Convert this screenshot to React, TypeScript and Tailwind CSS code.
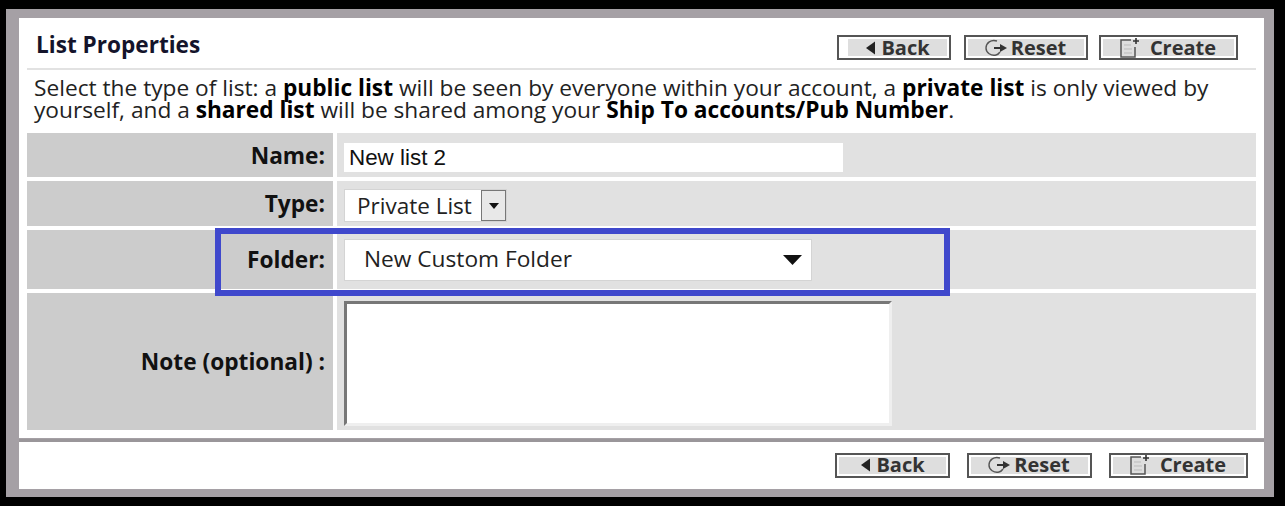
import React from 'react';

function BackIcon() {
  return (
    <svg width="11" height="14" viewBox="0 0 11 14" className="mr-[5px] shrink-0">
      <path d="M10 0.5 L1 7 L10 13.5 Z" fill="#222" />
    </svg>
  );
}

function ResetIcon() {
  return (
    <svg width="24" height="20" viewBox="0 0 24 20" className="mr-[3px] -ml-[2px] shrink-0" fill="none">
      <path d="M13 3 C7 1 2 5 2 10 C2 15 7 18 12 17 C14 16.6 15 15.5 16 14" stroke="#555" strokeWidth="1.4" />
      <path d="M10 9 L16 9 L16 6 L23 10 L16 14 L16 11 L10 11 Z" fill="#333" />
    </svg>
  );
}

function CreateIcon() {
  return (
    <svg width="23" height="22" viewBox="0 0 23 22" className="mr-[8px] -ml-[2px] shrink-0" fill="none">
      <path d="M12 3 L2 3 L2 20 L16 20 L16 10" stroke="#555" strokeWidth="1.5" />
      <path d="M5 8 H12 M5 12 H13 M5 16 H13" stroke="#bbb" strokeWidth="1" />
      <path d="M17 1 L17 7 M14 4 L20 4" stroke="#333" strokeWidth="1.6" />
    </svg>
  );
}

function ToolButton({ icon, label, className }: { icon: React.ReactNode; label: string; className: string }) {
  return (
    <button className={`h-[25px] border-2 border-[#555] bg-white p-[2px] ${className}`}>
      <span className="flex h-full items-center justify-center bg-[#dedede] text-[20px] leading-none font-bold text-[#333]">
        {icon}
        {label}
      </span>
    </button>
  );
}

function Row({ label, height, children }: { label: string; height: string; children: React.ReactNode }) {
  return (
    <div className={`flex gap-1 ${height}`}>
      <div className="flex w-[306px] items-center justify-end bg-[#cccccc] pt-[2px] pr-2 text-[22.7px] font-bold text-[#111]">{label}</div>
      <div className="flex flex-1 items-center bg-[#e1e1e1] pl-[7px]">{children}</div>
    </div>
  );
}

export default function App() {
  return (
    <div className="h-[506px] w-[1285px] bg-black pt-[9px] pr-[11px] pb-[9px] pl-[6px] font-['Open_Sans',sans-serif]">
      <div className="relative flex h-full flex-col bg-[#a5a0a5] pt-[9px] pr-[10px] pb-[8px] pl-[13px]">
        <div className="flex h-[420px] flex-col bg-white px-2">
          <div className="flex h-[52px] items-center justify-between border-b-2 border-[#e2e2e2] pr-[18px] pl-[9px]">
            <h2 className="pt-[4px] text-[22.6px] font-bold text-[#14142b]">List Properties</h2>
            <div className="flex pt-[9px]">
              <ToolButton className="w-[114px] pl-[9px]" icon={<BackIcon />} label="Back" />
              <ToolButton className="ml-[13px] w-[124px]" icon={<ResetIcon />} label="Reset" />
              <ToolButton className="ml-[11px] w-[139px]" icon={<CreateIcon />} label="Create" />
            </div>
          </div>
          <p className="mt-[7px] pl-[7px] text-[22.7px] leading-[22px] whitespace-nowrap text-[#222]">
            Select the type of list: a <b className="text-black">public list</b> will be seen by everyone within your account, a <b className="text-black">private list</b> is only viewed by
            <br />
            yourself, and a <b className="text-black">shared list</b> will be shared among your <b className="text-black">Ship To accounts/Pub Number</b>.
          </p>
          <div className="mt-[12px] flex flex-col gap-1">
            <Row label="Name:" height="h-[44px]">
              <input
                readOnly
                value="New list 2"
                className="mt-[5px] h-[29px] w-[499px] bg-white pl-[5px] font-['Liberation_Sans',sans-serif] text-[22.4px] text-[#111] outline-none"
              />
            </Row>
            <Row label="Type:" height="h-[45px]">
              <div className="mt-[4px] flex h-[33px] w-[163px] items-center border border-[#d4d4d4] bg-white pl-[12px] text-[22.5px] text-[#222]">
                Private List
                <span className="ml-auto flex h-full w-[25px] items-center justify-center border border-[#777] bg-[#e8e8e8]">
                  <svg width="10" height="6" viewBox="0 0 10 6">
                    <path d="M0 0 H10 L5 6 Z" fill="#111" />
                  </svg>
                </span>
              </div>
            </Row>
            <Row label="Folder:" height="h-[59px]">
              <div className="flex h-[42px] w-[468px] items-center justify-between border border-[#d4d4d4] bg-white pr-[9px] pl-[19px] text-[22.7px] text-[#222]">
                New Custom Folder
                <svg width="19" height="10" viewBox="0 0 19 10">
                  <path d="M0 0 H19 L9.5 10 Z" fill="#111" />
                </svg>
              </div>
            </Row>
            <Row label="Note (optional) :" height="h-[137px]">
              <textarea
                readOnly
                className="mt-[4px] h-[125px] w-[548px] resize-none border-[3px] border-t-[#777] border-r-[#efefef] border-b-[#efefef] border-l-[#777] bg-white outline-none"
              />
            </Row>
          </div>
        </div>
        <div className="mt-[1px] h-[3px] bg-[#9a969a]" />
        <div className="flex flex-1 items-center justify-end bg-white pr-[16px] pb-[1px]">
          <ToolButton className="w-[115px]" icon={<BackIcon />} label="Back" />
          <ToolButton className="ml-[17px] w-[125px]" icon={<ResetIcon />} label="Reset" />
          <ToolButton className="ml-[17px] w-[139px]" icon={<CreateIcon />} label="Create" />
        </div>
        <div className="absolute top-[219px] left-[209px] h-[68px] w-[735px] border-[6px] border-[#3f48cc]" />
      </div>
    </div>
  );
}
